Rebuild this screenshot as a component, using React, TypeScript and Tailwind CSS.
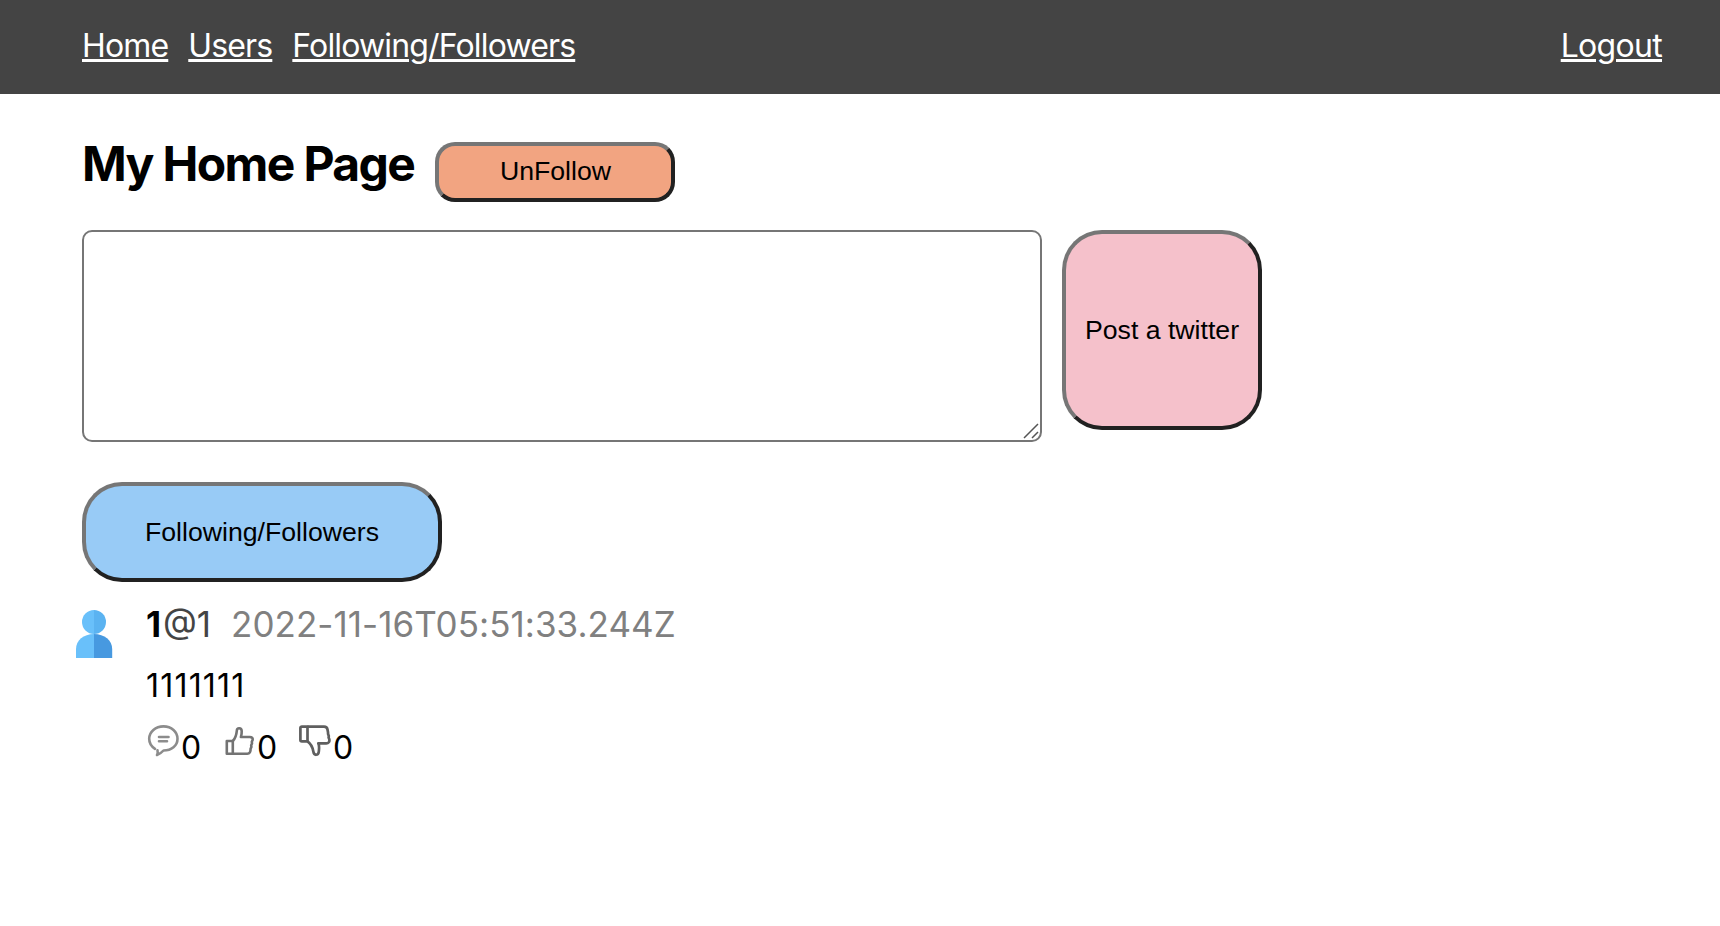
import type { ReactNode } from "react";

const navLinks = ["Home", "Users", "Following/Followers"];

function Avatar() {
  return (
    <svg className="block h-12 w-[37px]" viewBox="0.500 0 37 48">
      <path d="M18.5 0a12 12 0 0 0 0 24z" fill="#69c0fa" />
      <path d="M18.5 0a12 12 0 0 1 0 24z" fill="#5bb3f1" />
      <path d="M18.5 24C8 24 .5 30.500.5 39V48H18.5z" fill="#69c0fa" />
      <path d="M18.500 24C29 24 36.700 30.500 36.700 39V48H18.500z" fill="#4799e0" />
    </svg>
  );
}

function CommentIcon() {
  return (
    <svg className="h-8 w-8" viewBox="-1 0 32 32" fill="none" stroke="#8c8c8c" strokeWidth="2.6" strokeLinecap="round" strokeLinejoin="round">
      <path d="M7 23.800C3.300 21.500 1.200 18 1.200 13.800 1.200 6.800 7.500 1.400 15.500 1.400s14 5.400 14 12.400S23.500 25.500 15.500 25.500c-2 2.200-4 3.600-6.500 4.500.7-1.500.9-3 .5-4.800" />
      <path d="M11 12h9.500M11 16.300h8" />
    </svg>
  );
}

function LikeIcon() {
  return (
    <svg className="h-8 w-8" viewBox="-.8 0 32 32" fill="none" stroke="#737373" strokeWidth="2.6" strokeLinejoin="round">
      <path d="M3 16h6v12.700H3z" />
      <path d="M9 16c2.500-2.600 3.600-6 4-10.200.2-3.500 4.700-3.300 4.900.2.100 2-.2 4-.8 6h9c1.800 0 3 1 2.800 2.700l-.9 2 .2 1.800-.8 1.800.2 1.700-.8 1.800c.1 3-.9 4.900-3.300 4.900H9" />
    </svg>
  );
}

function DislikeIcon() {
  return (
    <svg className="h-8 w-8" viewBox="-.5 0 32 32" fill="none" stroke="#5f5f5f" strokeWidth="2.7" strokeLinejoin="round">
      <path d="M8 1.700H2.400C1.400 1.700.9 2.100.9 3v12c0 .9.500 1.400 1.500 1.400h5.600z" />
      <path d="M8 1.700H24.500c2 0 3.200.9 3.500 2.800l.5 2.800.1 1.800.7 1.800-.2 1.700.7 1.700c.5 2.600-.8 4-3 4H18.800c1.300 2.500.8 5.500.5 8.300-.5 4.200-4.800 4.200-5.400.2-.7-4.500-2.500-8-5.900-10.400" />
    </svg>
  );
}

function Count({ icon }: { icon: ReactNode }) {
  return (
    <div className="flex w-[76px]">
      {icon}
      <span className="ml-[2px] mt-[3px] leading-[40px]">0</span>
    </div>
  );
}

export default function App() {
  return (
    <div className="min-h-[926px] bg-white font-['Inter',sans-serif] text-[32px] text-black">
      <nav className="flex h-[94px] items-start bg-[#444444] pl-[82px] pr-[58px] pt-[26px] leading-[39px] tracking-[-0.85px] text-white">
        <div className="flex flex-1 gap-5">
          {navLinks.map((label) => (
            <a key={label} href="#" className="underline decoration-[3px] underline-offset-[2px]">{label}</a>
          ))}
        </div>
        <a href="#" className="tracking-[-0.7px] underline decoration-[3px] underline-offset-[2px]">Logout</a>
      </nav>
      <main className="pl-[82px]">
        <div className="flex h-[136px] items-start pt-12">
          <h1 className="mt-[-7px] w-[353px] whitespace-nowrap text-[48px] font-bold leading-[58px] tracking-[-1.63px]">My Home Page</h1>
          <button className="h-[60px] w-60 rounded-[20px] border-4 border-b-[#212121] border-l-[#767676] border-r-[#212121] border-t-[#767676] bg-[#f2a481] pb-[2px] pl-px font-['Liberation_Sans',sans-serif] text-[26.67px] leading-[30px]">UnFollow</button>
        </div>
        <div className="flex gap-5">
          <div className="flex h-[212px] w-[960px] items-end justify-end rounded-[10px] border-2 border-[#767676]">
            <svg className="mb-px mr-px h-4 w-4" viewBox="0 0 16 16" fill="none" stroke="#555" strokeWidth="1.500">
              <path d="M1 15 15 1M9 15l6-6" />
            </svg>
          </div>
          <button className="h-[200px] w-[200px] rounded-[40px] border-4 border-b-[#212121] border-l-[#767676] border-r-[#212121] border-t-[#767676] bg-[#f5c1cb] font-['Liberation_Sans',sans-serif] text-[26.67px] leading-[30px]">Post a twitter</button>
        </div>
        <button className="mt-10 block h-[100px] w-[360px] rounded-[40px] border-4 border-b-[#212121] border-l-[#767676] border-r-[#212121] border-t-[#767676] bg-[#98cbf6] font-['Liberation_Sans',sans-serif] text-[26.67px] leading-[30px]">Following/Followers</button>
        <article className="ml-[-6px] mt-[28px] flex">
          <Avatar />
          <div className="ml-[33px]">
            <div className="mt-[-7px] flex text-[35px] leading-[42px]">
              <span className="w-[17px] font-bold">1</span>
              <span className="text-[#444444]">@1</span>
              <span className="ml-5 tracking-[0.04px] text-[#808080]">2022-11-16T05:51:33.244Z</span>
            </div>
            <p className="mt-[21px] leading-[40px] tracking-[1.2px]">1111111</p>
            <div className="mt-[19px] flex pl-px">
              <Count icon={<CommentIcon />} />
              <Count icon={<LikeIcon />} />
              <Count icon={<DislikeIcon />} />
            </div>
          </div>
        </article>
      </main>
    </div>
  );
}
